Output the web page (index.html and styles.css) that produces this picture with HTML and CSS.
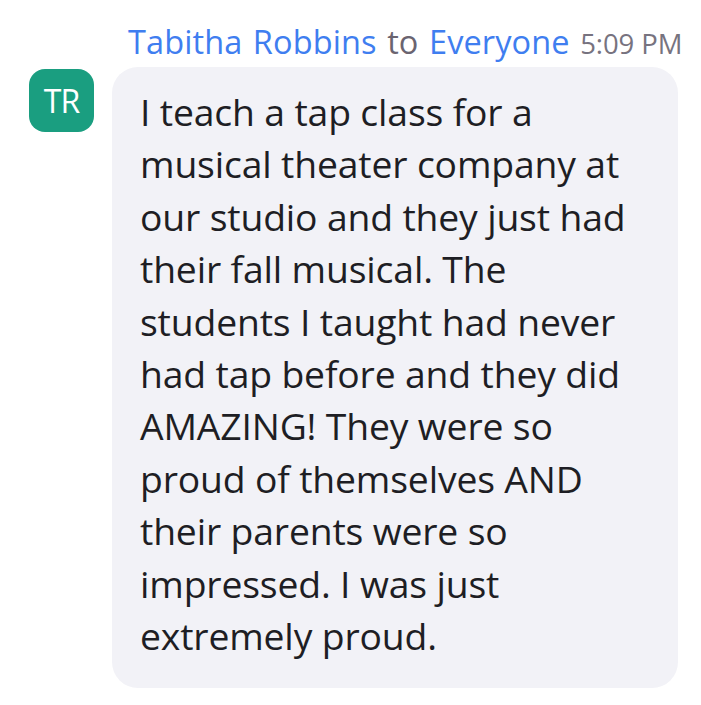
FILE: index.html
```html
<!DOCTYPE html>
<html>
<head>
<meta charset="utf-8">
<link rel="stylesheet" href="styles.css">
</head>
<body>
<div class="chat">
  <div class="meta">
    <span class="name">Tabitha Robbins</span>
    <span class="to">to</span>
    <span class="name">Everyone</span>
    <span class="time">5:09 PM</span>
  </div>
  <div class="row">
    <div class="avatar">TR</div>
    <div class="bubble">I teach a tap class for a<br>musical theater company at<br>our studio and they just had<br>their fall musical. The<br>students I taught had never<br>had tap before and they did<br>AMAZING! They were so<br>proud of themselves AND<br>their parents were so<br>impressed. I was just<br>extremely proud.</div>
  </div>
</div>
</body>
</html>
```
FILE: styles.css
```css
html, body {
  margin: 0;
  padding: 0;
  background: #ffffff;
}
.chat {
  width: 701px;
  height: 705px;
  padding: 23px 0 0 29px;
  box-sizing: border-box;
  font-family: "Open Sans", "Noto Sans", sans-serif;
}
.meta {
  margin-left: 99px;
  font-size: 32.5px;
  line-height: 38px;
  white-space: nowrap;
  letter-spacing: 0.1px;
  word-spacing: 2px;
}
.name {
  color: #3f7ef0;
}
.to {
  color: #6a6470;
}
.time {
  color: #77737f;
  font-size: 27.5px;
  letter-spacing: -0.1px;
  word-spacing: 0;
}
.row {
  display: flex;
  align-items: flex-start;
  gap: 18px;
  margin-top: 4px;
}
.avatar {
  width: 65px;
  height: 63px;
  flex: none;
  border-radius: 16px;
  background: #1a9e80;
  color: #ffffff;
  font-size: 32px;
  line-height: 63px;
  text-align: center;
  letter-spacing: -1px;
  margin-top: 2px;
}
.bubble {
  width: 566px;
  box-sizing: border-box;
  background: #f2f2f7;
  border-radius: 26px;
  padding: 19px 20px 26px 28px;
  font-size: 37.3px;
  line-height: 52.4px;
  color: #1e1e24;
  letter-spacing: -0.15px;
  white-space: nowrap;
}
```
